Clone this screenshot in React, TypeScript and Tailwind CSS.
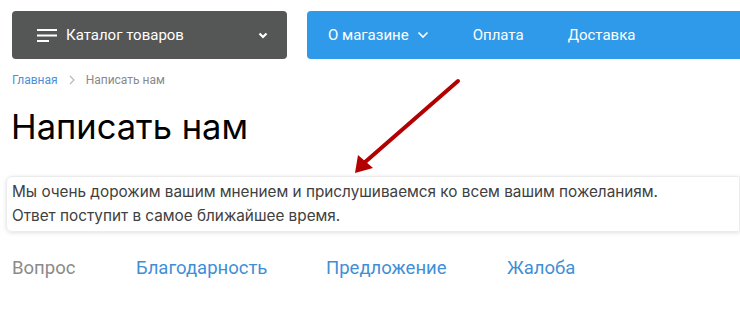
const tabs = ['Благодарность', 'Предложение', 'Жалоба'];

export default function App() {
  return (
    <div className="relative w-[740px] h-[310px] overflow-hidden bg-white font-['Roboto',sans-serif]">
      {/* Top navigation */}
      <div className="flex gap-5 pt-[11px] pl-3">
        <div className="w-[275px] h-12 shrink-0 rounded bg-[#555656] flex items-center pl-[25px] pr-[19px] text-white">
          <svg width="20" height="13" viewBox="0 0 20 13" className="shrink-0">
            <rect x="0" y="0" width="20" height="2" fill="white" />
            <rect x="0" y="5.5" width="20" height="2" fill="white" />
            <rect x="0" y="11" width="12" height="2" fill="white" />
          </svg>
          <span className="ml-[9px] text-[15px]">Каталог товаров</span>
          <svg width="10" height="7" viewBox="0 0 10 7" className="ml-auto">
            <path d="M1.5 1.5 L5 5 L8.5 1.5" stroke="white" strokeWidth="2.2" fill="none" />
          </svg>
        </div>
        <div className="flex-1 h-12 rounded-l bg-[#2f9aea] flex items-center pl-[21px] gap-[44px] text-white text-[15px]">
          <div className="flex items-center gap-2">
            <span>О магазине</span>
            <svg width="12" height="8" viewBox="0 0 12 8">
              <path d="M1.5 1.5 L6 6 L10.5 1.5" stroke="white" strokeWidth="1.6" fill="none" />
            </svg>
          </div>
          <span>Оплата</span>
          <span>Доставка</span>
        </div>
      </div>

      {/* Breadcrumbs */}
      <div className="flex items-center gap-[11px] pl-3 mt-[12px] text-[12px]">
        <span className="text-[#4a90d9]">Главная</span>
        <svg width="6" height="10" viewBox="0 0 6 10">
          <path d="M1 1 L5 5 L1 9" stroke="#b8b8b8" strokeWidth="1.2" fill="none" />
        </svg>
        <span className="text-[#8a8a8a]">Написать нам</span>
      </div>

      <h1 className="pl-[11px] mt-[18px] font-['Inter',sans-serif] text-[34.5px] leading-[40px] text-black">Написать нам</h1>

      {/* Notice box */}
      <div className="ml-[6px] mt-[29px] rounded-l-md border border-[#ececec] shadow-[0_1px_4px_rgba(0,0,0,0.12)] pl-[5px] py-[3px] font-['Inter',sans-serif] text-[15.3px] leading-6 text-[#404040]">
        <p>Мы очень дорожим вашим мнением и прислушиваемся ко всем вашим пожеланиям.</p>
        <p>Ответ поступит в самое ближайшее время.</p>
      </div>

      {/* Tabs */}
      <div className="flex items-center pl-3 mt-[23px] text-[18.5px]">
        <span className="text-[#8a8a8a] w-[124px]">Вопрос</span>
        <span className="text-[#3f8fd7] w-[190px]">{tabs[0]}</span>
        <span className="text-[#3f8fd7] w-[181px]">{tabs[1]}</span>
        <span className="text-[#3f8fd7]">{tabs[2]}</span>
      </div>

      {/* Annotation arrow */}
      <svg className="absolute left-0 top-0 pointer-events-none" width="740" height="310">
        <line x1="458" y1="81" x2="364" y2="163" stroke="#b30000" strokeWidth="4" strokeLinecap="round" />
        <polygon points="355,173 358,155 373,168" fill="#b30000" />
      </svg>
    </div>
  );
}
